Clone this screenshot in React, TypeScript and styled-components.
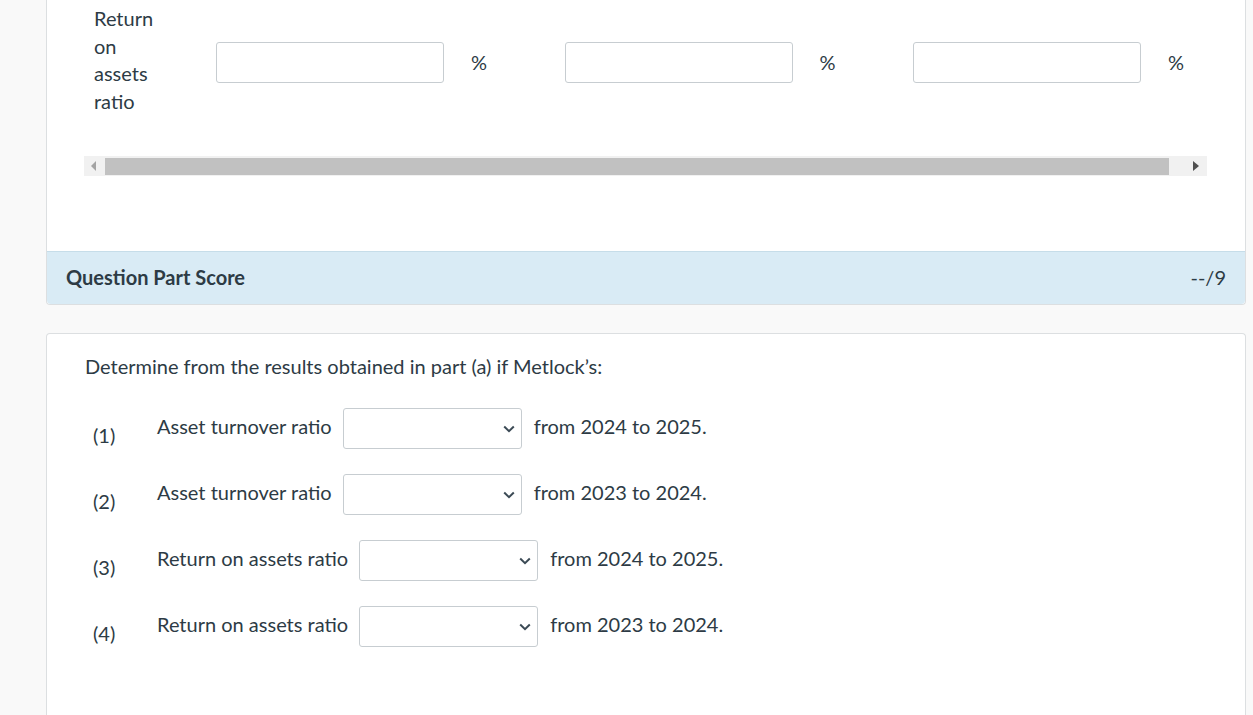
import styled, { createGlobalStyle } from "styled-components";

const GlobalStyle = createGlobalStyle`
  html, body {
    margin: 0;
    padding: 0;
    background: #f9f9f9;
    font-family: Lato, "Open Sans", sans-serif;
    color: #2d3b45;
  }
`;

const Page = styled.div`
  padding-left: 46px;
  width: 1200px;
`;

const TopCard = styled.section`
  background: #fff;
  border: 1px solid #dcdfe1;
  border-top: none;
  border-radius: 0 0 4px 4px;
`;

const TableArea = styled.div`
  padding: 5px 38px 75px 37px;
  overflow: hidden;
`;

const RatioRow = styled.div`
  display: flex;
  align-items: center;
`;

const RatioLabel = styled.div`
  flex-shrink: 0;
  width: 62px;
  margin: 0 60px 0 10px;
  font-size: 20px;
  line-height: 27.5px;
`;

const InputCol = styled.div`
  flex-shrink: 0;
  width: 348.5px;
  margin-top: 4px;
  display: flex;
  align-items: center;
`;

const TextInput = styled.div`
  width: 228px;
  height: 41px;
  box-sizing: border-box;
  border: 1px solid #c7cdd1;
  border-radius: 3px;
  background: #fff;
`;

const Percent = styled.span`
  margin-left: 27px;
  font-size: 20px;
`;

const ScrollTrack = styled.div`
  margin-top: 41px;
  height: 20px;
  background: #f1f1f1;
  display: flex;
  align-items: center;
`;

const ScrollBtn = styled.div<{ $dir: "left" | "right" }>`
  width: ${(p) => (p.$dir === "left" ? "21px" : "38px")};
  height: 100%;
  display: flex;
  align-items: center;
  justify-content: ${(p) => (p.$dir === "left" ? "center" : "flex-end")};
  padding-right: ${(p) => (p.$dir === "right" ? "8px" : "0")};
  box-sizing: border-box;
  &::after {
    content: "";
    width: 0;
    height: 0;
    border-top: 5px solid transparent;
    border-bottom: 5px solid transparent;
    ${(p) =>
      p.$dir === "left"
        ? "border-right: 5px solid #a3a3a3; margin-right: 2px;"
        : "border-left: 6px solid #505050;"}
  }
`;

const Thumb = styled.div`
  flex: 1;
  height: 17px;
  background: #c1c1c1;
`;

const ScoreBar = styled.div`
  height: 53px;
  box-sizing: border-box;
  background: #d9ebf5;
  border-top: 1px solid #c6dde9;
  border-radius: 0 0 4px 4px;
  display: flex;
  align-items: center;
  justify-content: space-between;
  padding: 0 19px 2px 19px;
  font-size: 20px;
`;

const ScoreTitle = styled.span`
  font-weight: 700;
`;

const ScoreValue = styled.span`
  font-size: 20px;
`;

const QuestionCard = styled.section`
  margin-top: 28px;
  background: #fff;
  border: 1px solid #dcdfe1;
  border-bottom: none;
  border-radius: 4px 4px 0 0;
  padding: 19px 38px 80px 38px;
  height: 400px;
`;

const Prompt = styled.p`
  margin: 0 0 28px 0;
  font-size: 20px;
  line-height: 27px;
`;

const QList = styled.div`
  display: flex;
  flex-direction: column;
  gap: 25px;
`;

const QRow = styled.div`
  display: flex;
  align-items: flex-start;
  font-size: 20px;
`;

const QNum = styled.span`
  width: 64px;
  padding-left: 8px;
  margin-top: 15px;
  line-height: 24px;
`;

const QLabel = styled.span`
  margin-right: 11px;
  line-height: 24px;
  margin-top: 6px;
`;

const Select = styled.div`
  width: 179px;
  height: 41px;
  box-sizing: border-box;
  border: 1px solid #c7cdd1;
  border-radius: 3px;
  background: #fff;
  display: flex;
  align-items: center;
  justify-content: flex-end;
  padding-right: 6px;
`;

const After = styled.span`
  margin-left: 12px;
  line-height: 24px;
  margin-top: 6px;
`;

const Chevron = () => (
  <svg width="12" height="8" viewBox="0 0 12 8">
    <path d="M1.2 1.5 L6 6.2 L10.8 1.5" fill="none" stroke="#3b4a55" strokeWidth="2" />
  </svg>
);

const questions = [
  { n: 1, label: "Asset turnover ratio", tail: "from 2024 to 2025." },
  { n: 2, label: "Asset turnover ratio", tail: "from 2023 to 2024." },
  { n: 3, label: "Return on assets ratio", tail: "from 2024 to 2025." },
  { n: 4, label: "Return on assets ratio", tail: "from 2023 to 2024." },
];

export default function App() {
  return (
    <Page>
      <GlobalStyle />
      <TopCard>
        <TableArea>
          <RatioRow>
            <RatioLabel>Return on assets ratio</RatioLabel>
            {[0, 1, 2].map((i) => (
              <InputCol key={i}>
                <TextInput />
                <Percent>%</Percent>
              </InputCol>
            ))}
          </RatioRow>
          <ScrollTrack>
            <ScrollBtn $dir="left" />
            <Thumb />
            <ScrollBtn $dir="right" />
          </ScrollTrack>
        </TableArea>
        <ScoreBar>
          <ScoreTitle>Question Part Score</ScoreTitle>
          <ScoreValue>--/9</ScoreValue>
        </ScoreBar>
      </TopCard>
      <QuestionCard>
        <Prompt>Determine from the results obtained in part (a) if Metlock’s:</Prompt>
        <QList>
          {questions.map((q) => (
            <QRow key={q.n}>
              <QNum>({q.n})</QNum>
              <QLabel>{q.label}</QLabel>
              <Select>
                <Chevron />
              </Select>
              <After>{q.tail}</After>
            </QRow>
          ))}
        </QList>
      </QuestionCard>
    </Page>
  );
}
